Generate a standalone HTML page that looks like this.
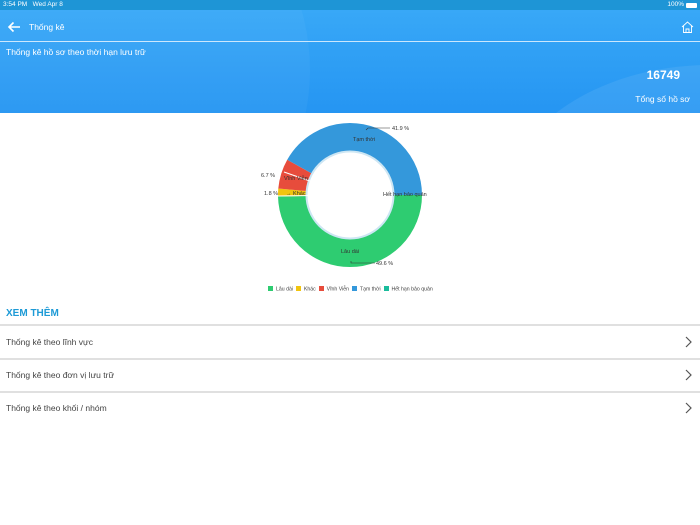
<!DOCTYPE html>
<html><head><meta charset="utf-8"><style>
*{margin:0;padding:0;box-sizing:border-box}
body{width:700px;height:525px;background:#fff;font-family:"Liberation Sans",sans-serif;position:relative;overflow:hidden}
.abs{position:absolute}
#status{left:0;top:0;width:700px;height:10px;background:#1e95d6;color:#fff;font-size:6.5px;line-height:10px}
#hdr{left:0;top:10px;width:700px;height:103px;background:linear-gradient(180deg,#38a8f7,#2595f2);overflow:hidden}
.item{left:0;width:700px;height:32px;font-size:8.5px;color:#444;line-height:32px;padding-left:6px}
.sep{left:0;width:700px;height:2px;background:#e0e0e0}
.chev{position:absolute;right:8px;top:10px}
.lg{display:inline-block;width:5px;height:5px;margin-right:3px;vertical-align:-0.5px}
</style></head><body>
<div id="status" class="abs"><span style="position:absolute;left:3px">3:54 PM&nbsp;&nbsp;&nbsp;Wed Apr 8</span><span style="position:absolute;right:16px">100%</span><span style="position:absolute;right:3px;top:3px;width:11px;height:5px;background:#fff;border-radius:1px"></span></div>
<div id="hdr" class="abs">
  <div class="abs" style="left:-320px;top:-200px;width:630px;height:520px;border-radius:50%;background:rgba(255,255,255,0.04)"></div>
  <div class="abs" style="left:500px;top:55px;width:420px;height:300px;border-radius:50%;background:rgba(255,255,255,0.08)"></div>
  <svg class="abs" style="left:7px;top:11px" width="14" height="12" viewBox="0 0 14 12"><path d="M13 6H2M6.5 1.5L2 6l4.5 4.5" stroke="#fff" stroke-width="1.6" fill="none"/></svg>
  <div class="abs" style="left:29px;top:12px;color:#fff;font-size:8.5px">Thống kê</div>
  <svg class="abs" style="left:681px;top:11px" width="13" height="12" viewBox="0 0 13 12"><path d="M1 6L6.5 1 12 6M2.5 5v6.5h8V5M5 11.5V8h3v3.5" stroke="#fff" stroke-width="0.9" fill="none"/></svg>
  <div class="abs" style="left:0;top:31px;width:700px;height:1px;background:rgba(255,255,255,0.75)"></div>
  <div class="abs" style="left:6px;top:37px;color:#fff;font-size:8.5px">Thống kê hồ sơ theo thời hạn lưu trữ</div>
  <div class="abs" style="right:20px;top:58px;color:#fff;font-size:12px;font-weight:bold">16749</div>
  <div class="abs" style="right:10px;top:84px;color:#fff;font-size:8.5px">Tổng số hồ sơ</div>
</div>
<svg class="abs" style="left:0;top:0" width="700" height="300" viewBox="0 0 700 300">
  <circle cx="350" cy="195" r="57.5" fill="none" stroke="#2ecc71" stroke-width="29" stroke-dasharray="179.2 400" stroke-dashoffset="0"/>
  <circle cx="350" cy="195" r="57.5" fill="none" stroke="#f1c40f" stroke-width="29" stroke-dasharray="6.5 400" stroke-dashoffset="-179.2"/>
  <circle cx="350" cy="195" r="57.5" fill="none" stroke="#e74c3c" stroke-width="29" stroke-dasharray="24.2 400" stroke-dashoffset="-185.7"/>
  <circle cx="350" cy="195" r="57.5" fill="none" stroke="#3498db" stroke-width="29" stroke-dasharray="151.4 400" stroke-dashoffset="-209.9"/>
  <circle cx="350" cy="195" r="43.5" fill="none" stroke="#cde6f3" stroke-width="2"/>
  <line x1="350" y1="195" x2="278" y2="196" stroke="#fff" stroke-width="1"/>
  <line x1="350" y1="195" x2="284" y2="172" stroke="#fff" stroke-width="1"/>
  <g font-size="5.5" fill="#333">
    <text x="353" y="141">Tạm thời</text>
    <path d="M366 130l2 -2h22" stroke="#333" stroke-width="0.6" fill="none"/>
    <text x="392" y="130">41.9 %</text>
    <text x="284" y="180">Vĩnh Viễn</text>
    <text x="261" y="177">6.7 %</text>
    <text x="264" y="195">1.8 %</text>
    <text x="286" y="195">→ Khác</text>
    <text x="383" y="196">Hết hạn bảo quản</text>
    <text x="341" y="253">Lâu dài</text>
    <path d="M351 261v2h24" stroke="#333" stroke-width="0.6" fill="none"/>
    <text x="376" y="265">49.6 %</text>
  </g>
</svg>
<div class="abs" style="left:268px;top:286px;font-size:5.2px;color:#444;white-space:nowrap">
<span class="lg" style="background:#2ecc71"></span>Lâu dài&nbsp;&nbsp;<span class="lg" style="background:#f1c40f"></span>Khác&nbsp;&nbsp;<span class="lg" style="background:#e74c3c"></span>Vĩnh Viễn&nbsp;&nbsp;<span class="lg" style="background:#3498db"></span>Tạm thời&nbsp;&nbsp;<span class="lg" style="background:#1abc9c"></span>Hết hạn bảo quản</div>
<div class="abs" style="left:6px;top:308px;font-size:10px;font-weight:bold;color:#1d9ad6">XEM THÊM</div>
<div class="sep abs" style="top:324px"></div>
<div class="item abs" style="top:326px">Thống kê theo lĩnh vực<svg class="chev" width="7" height="12" viewBox="0 0 7 12"><path d="M1 1l5 5-5 5" stroke="#555" stroke-width="1.2" fill="none"/></svg></div>
<div class="sep abs" style="top:358px"></div>
<div class="item abs" style="top:359px">Thống kê theo đơn vị lưu trữ<svg class="chev" width="7" height="12" viewBox="0 0 7 12"><path d="M1 1l5 5-5 5" stroke="#555" stroke-width="1.2" fill="none"/></svg></div>
<div class="sep abs" style="top:391px"></div>
<div class="item abs" style="top:392px">Thống kê theo khối / nhóm<svg class="chev" width="7" height="12" viewBox="0 0 7 12"><path d="M1 1l5 5-5 5" stroke="#555" stroke-width="1.2" fill="none"/></svg></div>
</body></html>
